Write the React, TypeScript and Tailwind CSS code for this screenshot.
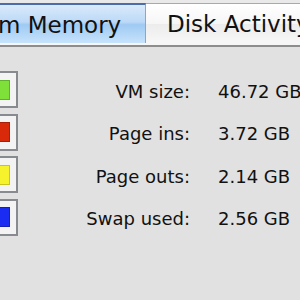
const rows = [
  { label: "VM size:", value: "46.72 GB", fill: "bg-[#7fe03a]", edge: "border-[#5cb02a]" },
  { label: "Page ins:", value: "3.72 GB", fill: "bg-[#d9290b]", edge: "border-[#a81e08]" },
  { label: "Page outs:", value: "2.14 GB", fill: "bg-[#f6f22c]", edge: "border-[#c9c41e]" },
  { label: "Swap used:", value: "2.56 GB", fill: "bg-[#1b2cf2]", edge: "border-[#1420b8]" },
];

export default function App() {
  return (
    <div
      className="w-[300px] h-[300px] overflow-hidden bg-[#e1e1e1] text-[#111]"
      style={{ fontFamily: '"DejaVu Sans", "Lucida Grande", sans-serif' }}
    >
      {/* tab strip */}
      <div className="h-[47px] bg-[#e9e9e9] pt-[3px] border-b-2 border-[#8d8d8d]">
        <div className="flex h-[40px] whitespace-nowrap">
          <div className="ml-[-70px] w-[216px] shrink-0 border-t-2 border-r border-[#4a6fa8] border-r-[#8aa6c8] bg-[linear-gradient(#d9eafb_0%,#bcd9f7_45%,#9fcaf3_52%,#c6e3fb_100%)] pl-[4.6px] flex items-center pt-[2px]">
            <span className="text-[23px] leading-none">System Memory</span>
          </div>
          <div className="w-[154px] shrink-0 border-t border-[#a9a9a9] bg-[linear-gradient(#ffffff_0%,#f6f6f6_50%,#ececec_52%,#f7f7f7_100%)] pl-[21px] flex items-center pt-[2px]">
            <span className="text-[23px] leading-none">Disk Activity</span>
          </div>
        </div>
        <div className="h-[2px] bg-[#f6f6f6]" />
      </div>

      {/* stats */}
      <div className="pt-[24px] flex flex-col gap-[5.5px]">
        {rows.map((r) => (
          <div key={r.label} className="flex items-center h-[37px] whitespace-nowrap">
            <div className="ml-[-18px] w-[36px] h-[37px] shrink-0 border-2 border-[#878b90] bg-[#f3f3f3] flex items-center justify-center">
              <div className={`w-[20px] h-[20px] border ${r.fill} ${r.edge}`} />
            </div>
            <div className="w-[172px] shrink-0 text-right text-[18px] pt-[3px]">{r.label}</div>
            <div className="ml-[28px] text-[18px] pt-[3px]">{r.value}</div>
          </div>
        ))}
      </div>
    </div>
  );
}
